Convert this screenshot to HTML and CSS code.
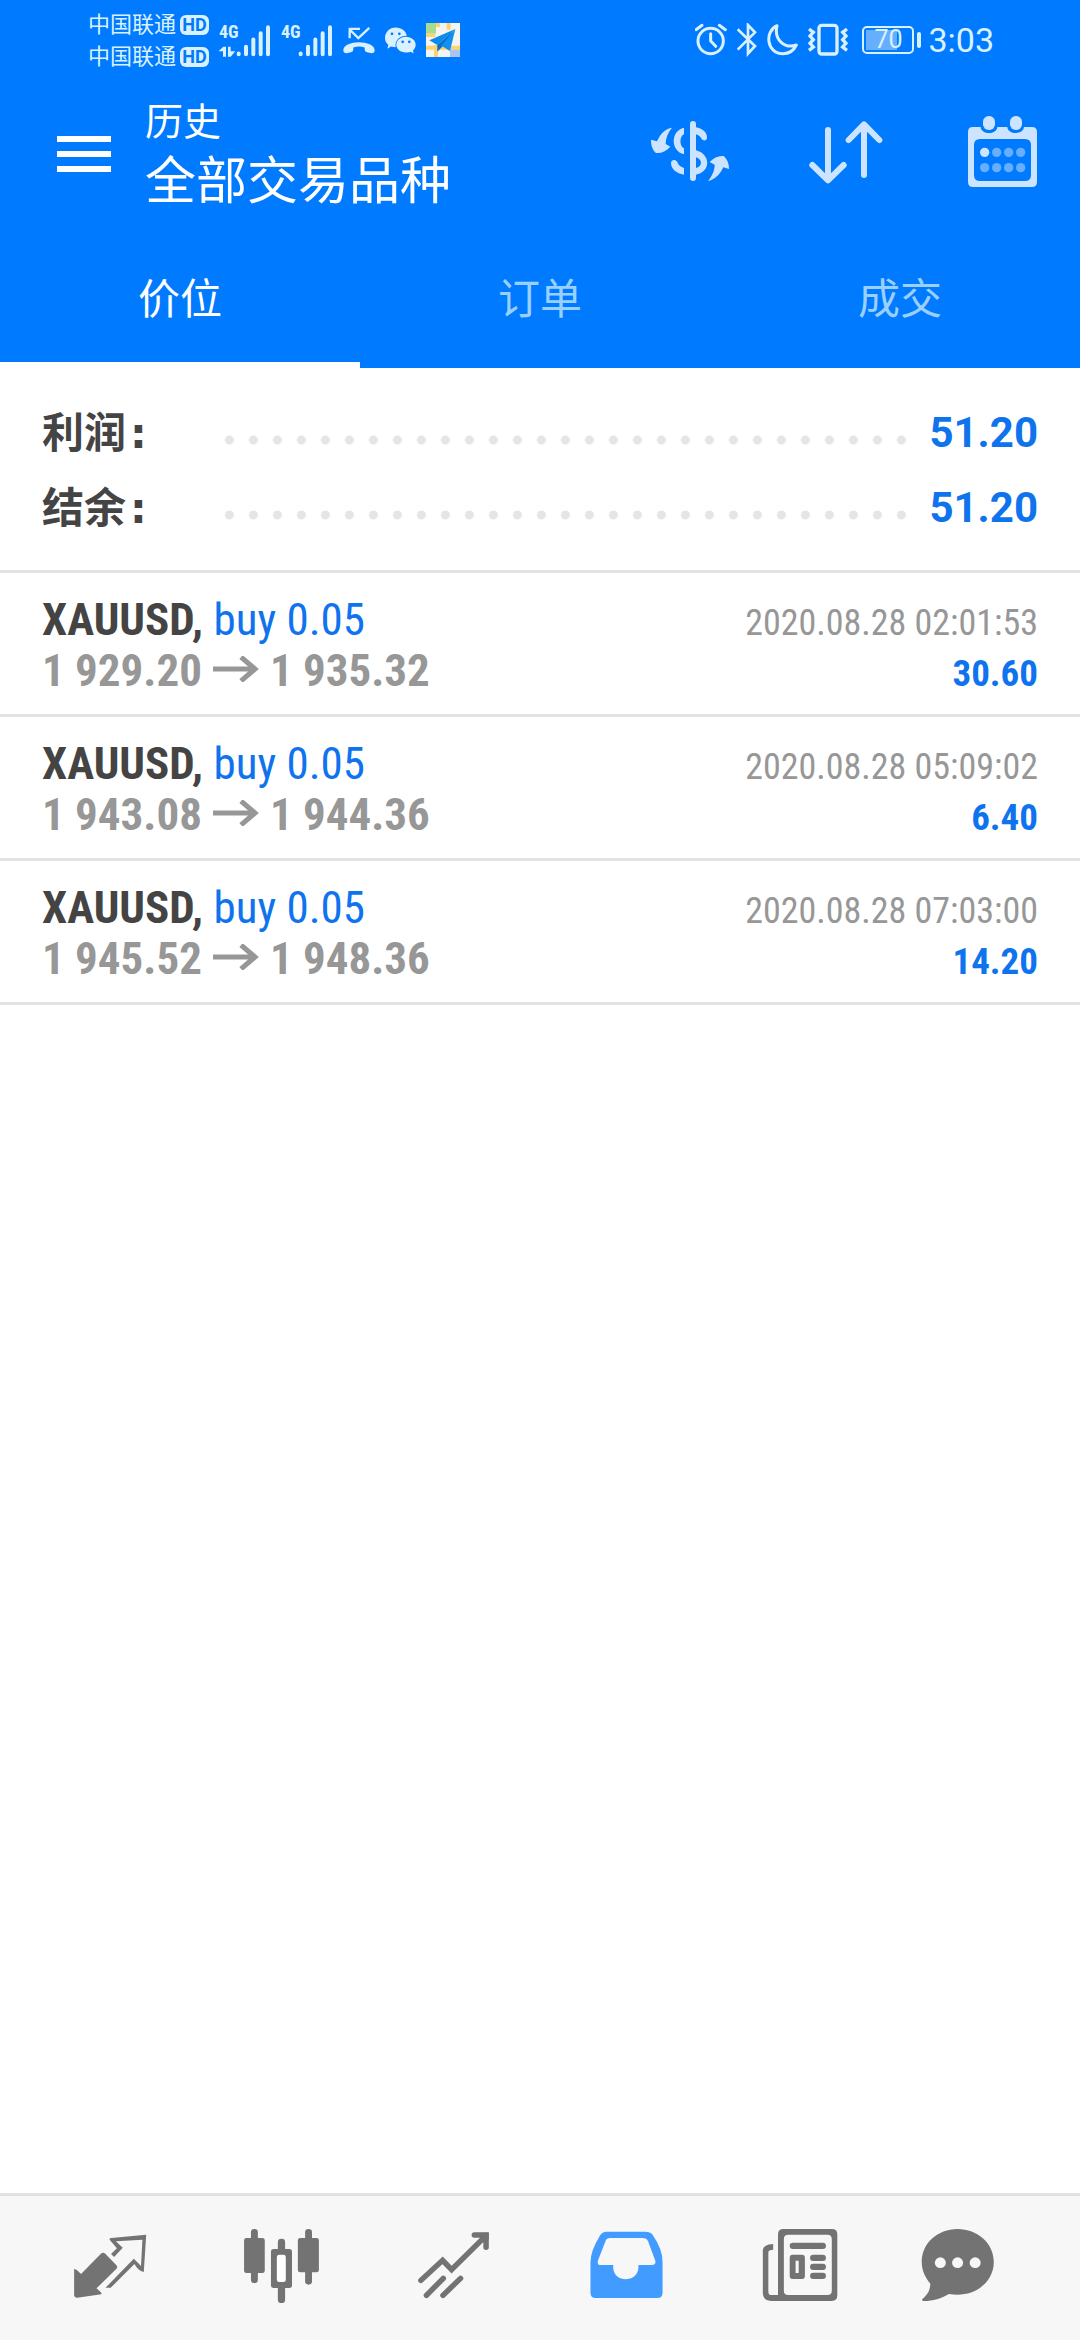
FILE: index.html
```html
<!DOCTYPE html>
<html lang="zh-CN">
<head>
<meta charset="utf-8">
<meta name="viewport" content="width=device-width, initial-scale=1">
<title>历史</title>
<link rel="stylesheet" href="styles.css">
</head>
<body>
<div class="app">
  <header class="header">
    <div class="status">
      <div class="status-group">
        <div class="carriers">
          <div class="carrier"><span>中国联通</span><span class="hd">HD</span></div>
          <div class="carrier"><span>中国联通</span><span class="hd">HD</span></div>
        </div>
        <div class="signal">
          <div class="network"><span>4G</span>
            <svg width="17" height="11" viewBox="0 0 51 33" fill="currentColor"><path d="M0 14 13 2h8v30h-9V16H0zM27 2h8v14h14L35 32h-8z"/></svg>
          </div>
          <svg width="35" height="33" viewBox="497 70 105 98" fill="none" stroke="currentColor" stroke-width="12" stroke-linecap="round"><path d="M505 158v2M527 138v22M549 116v44M571 97v63M593 79v81"/></svg>
        </div>
        <div class="signal">
          <div class="network"><span>4G</span></div>
          <svg width="35" height="33" viewBox="497 70 105 98" fill="none" stroke="currentColor" stroke-width="12" stroke-linecap="round"><path d="M505 158v2M527 138v22M549 116v44M571 97v63M593 79v81"/></svg>
        </div>
        <svg width="32" height="33" viewBox="813 74 96 98" fill="currentColor"><path d="M830 88h34M833 90v26M833 90l26 26 33-31" fill="none" stroke="currentColor" stroke-width="7"/><path d="M814 152c0-32 94-32 94 0 0 10-8 10-16 8-14-3-14-5-14-16-12-4-22-4-34 0 0 11 0 13-14 16-8 2-16 2-16-8z"/></svg>
        <svg width="31" height="33" viewBox="941 74 93 98"><path fill="currentColor" d="M973 84c18 0 32 11 33 25-20 0-36 13-33 34-6 0-10-1-14-2l-11 7 3-12c-6-5-10-12-10-20 0-18 14-32 32-32z"/><path fill="currentColor" d="M1004 112c17 0 29 11 29 24 0 7-3 12-8 17l2 9-9-5c-4 2-9 2-14 2-17 0-29-10-29-23s12-24 29-24z"/><g fill="#007aff"><circle cx="962" cy="103" r="4"/><circle cx="984" cy="103" r="4"/><circle cx="994" cy="127" r="4"/><circle cx="1014" cy="127" r="4"/></g></svg>
        <svg width="34" height="34" viewBox="0 0 102 102"><path fill="#f4f5f2" d="M0 0h102v102H0z"/><path fill="#a8dc8c" d="M0 0h30v32H0z"/><path fill="#ffd36b" d="M30 0h12v12H30zM62 0h12v20H62zM0 68h102v12H0zM24 66h12v36H24zM0 32h28v10H0z"/><path fill="#a9c4ee" d="M72 80h30v22H72z"/><path fill="#0a8bee" d="M88 18 10 52l24 14z"/><path fill="#0870cc" d="m88 18-54 48 0 20 14-14z"/><path fill="#1090f0" d="M88 18 46 68l26 16z"/></svg>
      </div>
      <div class="status-group">
        <svg width="32" height="34" viewBox="37 70 96 102" fill="none" stroke="currentColor" stroke-width="9"><circle cx="84" cy="124" r="38"/><path d="M84 102v22l15 16M40 90l18-13M110 77l18 13" stroke-linecap="round"/></svg>
        <svg width="20" height="34" viewBox="164 70 60 102" fill="none" stroke="currentColor" stroke-width="8"><path d="m166 89 52 50-21 23V76l21 22-52 52"/></svg>
        <svg width="31" height="34" viewBox="257 70 93 102" fill="none" stroke="currentColor" stroke-width="9" stroke-linejoin="round"><path d="M287 78c-38 17-32 84 18 84 18 0 32-9 40-26-34 12-68-14-58-58z"/></svg>
        <svg width="40" height="34" viewBox="383 70 120 102" fill="none" stroke="currentColor" stroke-width="10"><rect x="416" y="77" width="54" height="86" rx="8"/><path d="m386 88 13 10-10 11 10 11-10 11 10 11-13 10M500 88l-13 10 10 11-10 11 10 11-10 11 13 10"/></svg>
        <div class="battery"><span class="battery-level">70</span></div>
        <time class="clock">3:03</time>
      </div>
    </div>
    <div class="appbar">
      <button class="menu" type="button" aria-label="菜单">
        <svg width="54" height="36" viewBox="0 0 54 36" fill="currentColor"><path d="M0 0h54v6H0zM0 15h54v6H0zM0 30h54v6H0z"/></svg>
      </button>
      <div class="titles">
        <div class="subtitle">历史</div>
        <h1 class="title">全部交易品种</h1>
      </div>
      <div class="actions">
        <button type="button" aria-label="品种">
          <svg width="90" height="90" viewBox="75 57 270 270" fill="currentColor"><rect x="210" y="93" width="18" height="180" rx="9"/><path d="M192 113v20c-14 6-14 36 0 42v18c-40-10-42-70 0-80zM228 112c20 3 34 17 33 31 0 9-11 11-16 4-4-7-9-12-17-14zM153 219c0-10 13-13 19-3 3 10 10 14 20 18v20c-22-3-39-17-39-35zM228 181c46 12 44 66 0 73v-20c20-4 20-27 0-32z"/><path d="M156 113c-18 2-34 16-45 41l-18-5c0 15 3 29 15 40 15 2 30-5 43-19l-14-8c0-18 7-34 19-49zM264 273c18-3 34-16 46-41l17 5c0-14-4-28-16-39-14-2-29 4-42 18l15 8c0 17-8 35-20 49z"/></svg>
        </button>
        <button type="button" aria-label="排序">
          <svg width="90" height="90" viewBox="543 57 270 270" fill="none" stroke="currentColor" stroke-width="18" stroke-linecap="round" stroke-linejoin="round"><path d="M624 120v150M577 225l47 46 47-46M732 255V105M686 150l46-47 46 47"/></svg>
        </button>
        <button type="button" aria-label="日期">
          <svg width="90" height="90" viewBox="1011 57 270 270" fill="currentColor"><path fill-rule="evenodd" d="M1058 111h24c2 24 48 24 50 0h30c2 24 48 24 50 0h24q15 0 15 15v150q0 15-15 15h-177q-15 0-15-15V126q0-15 14-15zM1080 147q-18 0-18 18v90q0 18 18 18h135q18 0 18-18v-90q0-18-18-18z"/><rect x="1089" y="78" width="36" height="42" rx="17"/><rect x="1170" y="78" width="36" height="42" rx="17"/><circle cx="1094" cy="187" r="14"/><g opacity=".5"><circle cx="1130" cy="187" r="14"/><circle cx="1166" cy="187" r="14"/><circle cx="1202" cy="187" r="14"/><circle cx="1094" cy="233" r="14"/><circle cx="1130" cy="233" r="14"/><circle cx="1166" cy="233" r="14"/><circle cx="1202" cy="233" r="14"/></g></svg>
        </button>
      </div>
    </div>
    <div class="tabs" role="tablist">
      <button class="tab tab-active" type="button" role="tab" aria-selected="true">价位</button>
      <button class="tab" type="button" role="tab" aria-selected="false">订单</button>
      <button class="tab" type="button" role="tab" aria-selected="false">成交</button>
    </div>
  </header>

  <main class="content">
    <dl class="summary">
      <div class="summary-row"><dt>利润<span class="colon">:</span></dt><dd>51.20</dd></div>
      <div class="summary-row"><dt>结余<span class="colon">:</span></dt><dd>51.20</dd></div>
    </dl>
    <ul class="trades">
      <li class="trade">
        <div class="line"><span><b class="symbol">XAUUSD,</b> <span class="side">buy 0.05</span></span><time class="date">2020.08.28 02:01:53</time></div>
        <div class="line"><span class="prices">1 929.20<svg class="arrow" width="46" height="26" viewBox="0 0 46 26" role="img" aria-label="至"><path d="M0 13h42M28 1l14 12-14 12" fill="none" stroke="currentColor" stroke-width="5"/></svg>1 935.32</span><b class="profit">30.60</b></div>
      </li>
      <li class="trade">
        <div class="line"><span><b class="symbol">XAUUSD,</b> <span class="side">buy 0.05</span></span><time class="date">2020.08.28 05:09:02</time></div>
        <div class="line"><span class="prices">1 943.08<svg class="arrow" width="46" height="26" viewBox="0 0 46 26" role="img" aria-label="至"><path d="M0 13h42M28 1l14 12-14 12" fill="none" stroke="currentColor" stroke-width="5"/></svg>1 944.36</span><b class="profit">6.40</b></div>
      </li>
      <li class="trade">
        <div class="line"><span><b class="symbol">XAUUSD,</b> <span class="side">buy 0.05</span></span><time class="date">2020.08.28 07:03:00</time></div>
        <div class="line"><span class="prices">1 945.52<svg class="arrow" width="46" height="26" viewBox="0 0 46 26" role="img" aria-label="至"><path d="M0 13h42M28 1l14 12-14 12" fill="none" stroke="currentColor" stroke-width="5"/></svg>1 948.36</span><b class="profit">14.20</b></div>
      </li>
    </ul>
  </main>

  <nav class="bottom">
    <a href="#quotes" aria-label="行情"><svg width="100" height="100" viewBox="174 114 290 300" preserveAspectRatio="none" fill="currentColor"><path d="M215 266c9 3 14 9 20 16l57-60q7-7 14 0l31 33q6 6 0 12l-57 58 14 13v5l-70 10q-9 0-9-9z"/><path d="M318 176q0-2 5-2l101-10-7 112c-12-3-21-12-27-24l-69 71h-15l82-87 21 22 4-79-77 5 20 19-25 28-9-9 17-17-21-26z"/></svg></a>
    <a href="#charts" aria-label="图表"><svg width="100" height="100" viewBox="674 114 290 300" preserveAspectRatio="none" fill="currentColor"><rect x="709" y="174" width="60" height="105" rx="7"/><rect x="865" y="174" width="61" height="103" rx="7"/><rect x="729" y="147" width="20" height="162" rx="10"/><rect x="886" y="147" width="20" height="167" rx="10"/><rect x="807" y="176" width="21" height="40" rx="10"/><rect x="807" y="315" width="21" height="54" rx="10"/><rect x="787" y="207" width="61" height="117" rx="8"/><rect x="804" y="224" width="26" height="82" rx="7" fill="#fff"/></svg></a>
    <a href="#trade" aria-label="交易"><svg width="100" height="100" viewBox="1173 114 290 300" preserveAspectRatio="none" fill="none" stroke="currentColor" stroke-width="16" stroke-linecap="round"><path d="m1222 301 63-60 26 28 94-96M1377 165h34v37M1238 346l49-51M1286 346l51-51"/><path d="M1400 158h19v20l-14 10-12-12z" fill="currentColor" stroke="none"/></svg></a>
    <a href="#history" class="current" aria-label="历史" aria-current="page"><svg width="100" height="100" viewBox="105 114 290 300" preserveAspectRatio="none" fill="currentColor"><path fill-rule="evenodd" d="M194 155h112q17 0 22 11 28 42 28 80v92q0 16-15 16H162q-15 0-15-16v-92q0-32 28-80 6-11 19-11zm10 19q-10 0-13 8l-22 59q-4 14 8 14h36v10c3 44 69 44 73 0v-10h38q14 0 11-13l-21-58q-4-10-17-10z"/></svg></a>
    <a href="#news" aria-label="新闻"><svg width="100" height="100" viewBox="604 114 290 300" preserveAspectRatio="none" fill="currentColor"><path fill-rule="evenodd" d="M707 147h140q16 0 16 16v183q0 17-16 17H670q-23-2-23-24V209q2-15 30-17v17q-14 0-14 8v118q0 10 9 10h19V163q0-16 16-16zm14 17q-13 0-13 13v155q0 13 13 13h113q13 0 13-13V177q0-13-13-13z"/><rect x="725" y="188" width="105" height="19" rx="9"/><path fill-rule="evenodd" d="M733 224h28q8 0 8 9v55q0 9-8 9h-28q-8 0-8-9v-55q0-9 8-9zm9 18v37h9v-37z"/><rect x="784" y="224" width="46" height="19" rx="9"/><rect x="784" y="251" width="46" height="19" rx="9"/><rect x="784" y="278" width="46" height="19" rx="9"/></svg></a>
    <a href="#messages" aria-label="消息"><svg width="100" height="100" viewBox="1104 114 290 300" preserveAspectRatio="none" fill="currentColor"><path d="M1213 147c58 0 105 43 105 99 0 62-58 109-130 96-23 14-51 22-75 21q-5-2-2-6c17-15 22-27 23-46-14-18-25-38-25-65 0-56 46-99 104-99z"/><g fill="#f7f7f7"><circle cx="1163" cy="248" r="16"/><circle cx="1213" cy="248" r="16"/><circle cx="1264" cy="248" r="16"/></g></svg></a>
  </nav>
</div>
</body>
</html>
```

FILE: styles.css
```css
* {
  box-sizing: border-box;
}

body {
  margin: 0;
  background: #fff;
  color: #444;
  font-family: Roboto, "Noto Sans CJK SC", sans-serif;
}

svg {
  display: block;
  flex: none;
}

button {
  margin: 0;
  padding: 0;
  border: 0;
  background: none;
  color: inherit;
  font: inherit;
}

.app {
  display: flex;
  flex-direction: column;
  min-height: 100vh;
}

.header {
  background: #007aff;
  color: #fff;
}

/* Status bar */
.status {
  display: flex;
  justify-content: space-between;
  height: 80px;
  padding: 0 86px 0 88px;
  color: #d9f1ff;
}

.status-group {
  display: flex;
  align-items: center;
  gap: 10px;
}

.carriers {
  padding-top: 2px;
}

.carrier {
  display: flex;
  align-items: center;
  gap: 4px;
  font-size: 22px;
  line-height: 32px;
}

.hd {
  width: 29px;
  border-radius: 6px;
  background: #d9f1ff;
  color: #007aff;
  font-size: 18px;
  font-weight: 700;
  line-height: 20px;
  text-align: center;
}

.signal {
  display: flex;
}

.network {
  display: flex;
  flex-direction: column;
  justify-content: space-between;
  width: 17px;
  font-family: "Roboto Condensed", "Liberation Sans Narrow", sans-serif;
  font-size: 18px;
  font-weight: 700;
  line-height: 16px;
}

.battery {
  position: relative;
  width: 52px;
  height: 28px;
  margin-left: 4px;
  padding: 2px;
  border: 2px solid currentColor;
  border-radius: 5px;
}

.battery::after {
  content: "";
  position: absolute;
  right: -9px;
  top: 4px;
  width: 4px;
  height: 16px;
  border-radius: 2px;
  background: currentColor;
}

.battery-level {
  display: block;
  background: linear-gradient(90deg, #66afff 70%, transparent 70%);
  font-size: 25px;
  line-height: 20px;
  text-align: center;
}

.clock {
  margin-left: 4px;
  font-size: 34px;
}

/* App bar */
.appbar {
  display: flex;
  align-items: center;
  height: 148px;
}

.menu {
  padding: 0 34px 0 57px;
}

.titles {
  flex: 1;
}

.subtitle {
  font-size: 38px;
  line-height: 56px;
}

.title {
  margin: 0;
  font-size: 51px;
  font-weight: 400;
  line-height: 64px;
}

.actions {
  display: flex;
  color: #cce4ff;
}

.actions button {
  display: flex;
  justify-content: center;
  width: 156px;
}

.tabs {
  display: grid;
  grid-template-columns: repeat(3, 1fr);
}

.tab {
  height: 140px;
  border-bottom: 6px solid transparent;
  color: #99d0ff;
  font-size: 42px;
}

.tab-active {
  border-bottom-color: #fff;
  color: #fff;
}

/* Totals */
.content {
  flex: 1;
}

.summary {
  margin: 0;
  padding: 27px 42px 25px;
  border-bottom: 3px solid #e3e3e3;
}

.summary-row {
  display: flex;
  align-items: center;
  gap: 16px;
  height: 75px;
  font-size: 42px;
  font-weight: 700;
}

.summary-row dt {
  width: 160px;
  padding-bottom: 6px;
}

.colon {
  margin-left: 4px;
  font-family: "DejaVu Sans", sans-serif;
}

.summary-row::before {
  content: "";
  order: 1;
  flex: 1;
  align-self: flex-end;
  height: 60px;
  background: radial-gradient(circle, #e5e5e5 4px, transparent 5px) right center / 24px 24px repeat-x;
}

.summary-row dd {
  order: 2;
  margin: 0;
  color: #0f73ee;
}

/* Trades */
.trades {
  margin: 0;
  padding: 0;
  list-style: none;
  font-family: "Roboto Condensed", "Liberation Sans Narrow", sans-serif;
}

.trade {
  padding: 21px 42px 18px;
  border-bottom: 3px solid #e3e3e3;
}

.line {
  display: flex;
  align-items: baseline;
  justify-content: space-between;
  height: 51px;
  font-size: 45px;
  line-height: 51px;
}

.side,
.profit {
  color: #0f73ee;
}

.prices {
  color: #979797;
  font-weight: 700;
}

.arrow {
  display: inline-block;
  margin: 0 11px 4px;
}

.profit {
  font-size: 37px;
}

.date {
  color: #979797;
  font-size: 36px;
}

/* Bottom navigation */
.bottom {
  display: flex;
  align-items: center;
  justify-content: space-between;
  height: 147px;
  padding: 0 24px;
  border-top: 3px solid #e1e1e1;
  background: #f7f7f7;
}

.bottom a {
  display: flex;
  flex: 1;
  justify-content: center;
  color: #737373;
}

.bottom .current {
  color: #429bff;
}
```
